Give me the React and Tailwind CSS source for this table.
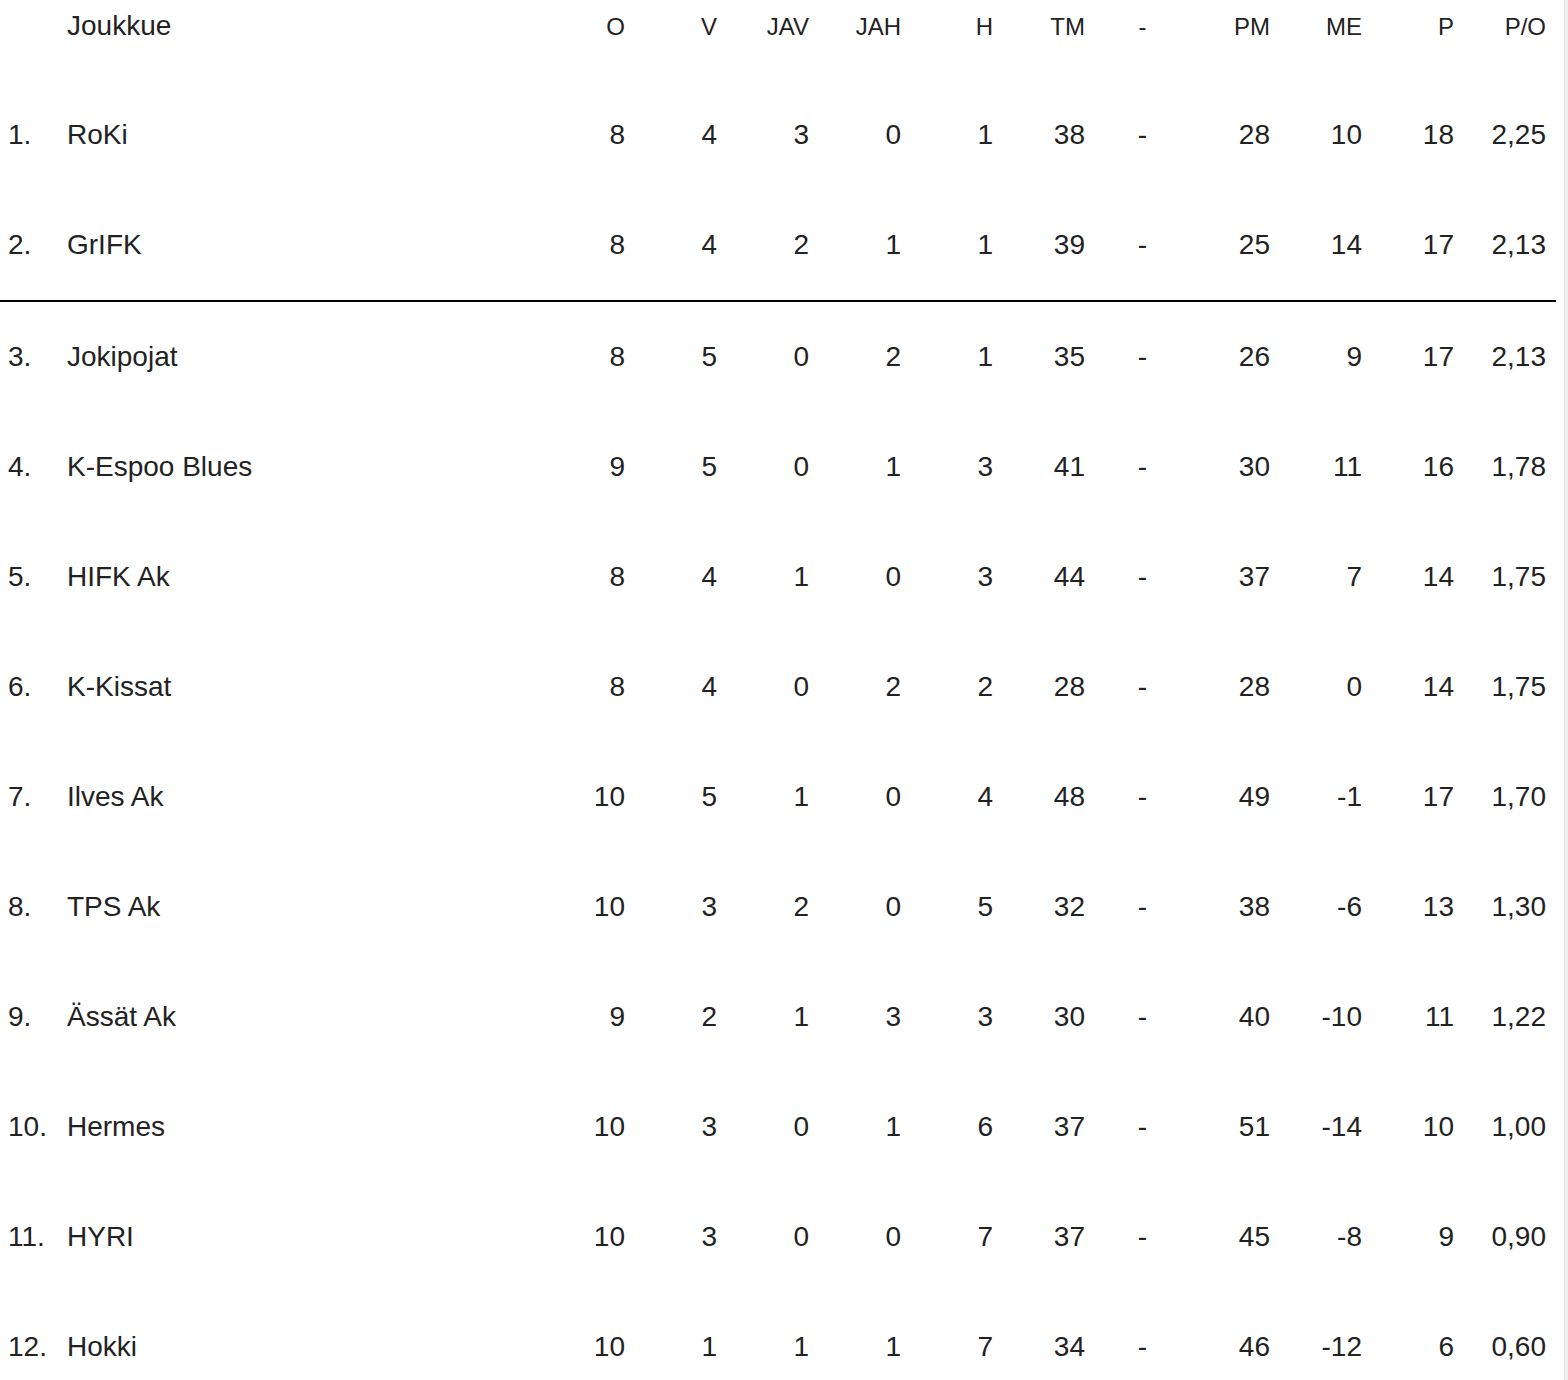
import React from "react";

const rows = [
  ["1.", "RoKi", "8", "4", "3", "0", "1", "38", "28", "10", "18", "2,25"],
  ["2.", "GrIFK", "8", "4", "2", "1", "1", "39", "25", "14", "17", "2,13"],
  ["3.", "Jokipojat", "8", "5", "0", "2", "1", "35", "26", "9", "17", "2,13"],
  ["4.", "K-Espoo Blues", "9", "5", "0", "1", "3", "41", "30", "11", "16", "1,78"],
  ["5.", "HIFK Ak", "8", "4", "1", "0", "3", "44", "37", "7", "14", "1,75"],
  ["6.", "K-Kissat", "8", "4", "0", "2", "2", "28", "28", "0", "14", "1,75"],
  ["7.", "Ilves Ak", "10", "5", "1", "0", "4", "48", "49", "-1", "17", "1,70"],
  ["8.", "TPS Ak", "10", "3", "2", "0", "5", "32", "38", "-6", "13", "1,30"],
  ["9.", "Ässät Ak", "9", "2", "1", "3", "3", "30", "40", "-10", "11", "1,22"],
  ["10.", "Hermes", "10", "3", "0", "1", "6", "37", "51", "-14", "10", "1,00"],
  ["11.", "HYRI", "10", "3", "0", "0", "7", "37", "45", "-8", "9", "0,90"],
  ["12.", "Hokki", "10", "1", "1", "1", "7", "34", "46", "-12", "6", "0,60"],
];

const grid = "grid grid-cols-[67px_476px_repeat(11,92px)]";

function Row({ r }) {
  return (
    <div className={`${grid} h-[110px] items-center text-[28px] leading-[32px]`}>
      <div className="pl-2">{r[0]}</div>
      <div>{r[1]}</div>
      {r.slice(2, 8).map((v, i) => (
        <div key={i} className="text-right pr-[10px]">{v}</div>
      ))}
      <div className="text-center pl-[3px]">-</div>
      {r.slice(8).map((v, i) => (
        <div key={"b" + i} className="text-right pr-[9px]">{v}</div>
      ))}
    </div>
  );
}

export default function App() {
  const heads = ["O", "V", "JAV", "JAH", "H", "TM"];
  const heads2 = ["PM", "ME", "P", "P/O"];
  return (
    <div
      className="flex min-h-screen bg-white text-[#222222]"
      style={{ fontFamily: '"Liberation Sans", Arial, Helvetica, sans-serif' }}
    >
      <div className="w-[1564px]">
        <div className="w-[1556px]">
          <div className={`${grid} h-[80px] items-baseline pt-[10px] leading-[32px]`}>
            <div></div>
            <div className="text-[28px]">Joukkue</div>
            {heads.map((h) => (
              <div key={h} className="text-right pr-[10px] text-[24px]">{h}</div>
            ))}
            <div className="text-center pl-[3px] text-[24px]">-</div>
            {heads2.map((h) => (
              <div key={h} className="text-right pr-[9px] text-[24px]">{h}</div>
            ))}
          </div>
          {rows.slice(0, 2).map((r) => (
            <Row key={r[0]} r={r} />
          ))}
          <div className="h-[2px] bg-black"></div>
          {rows.slice(2).map((r) => (
            <Row key={r[0]} r={r} />
          ))}
        </div>
      </div>
      <div className="w-[4px] shrink-0 bg-[#f1f1f1] border-l border-[#e4e4e4]"></div>
    </div>
  );
}
